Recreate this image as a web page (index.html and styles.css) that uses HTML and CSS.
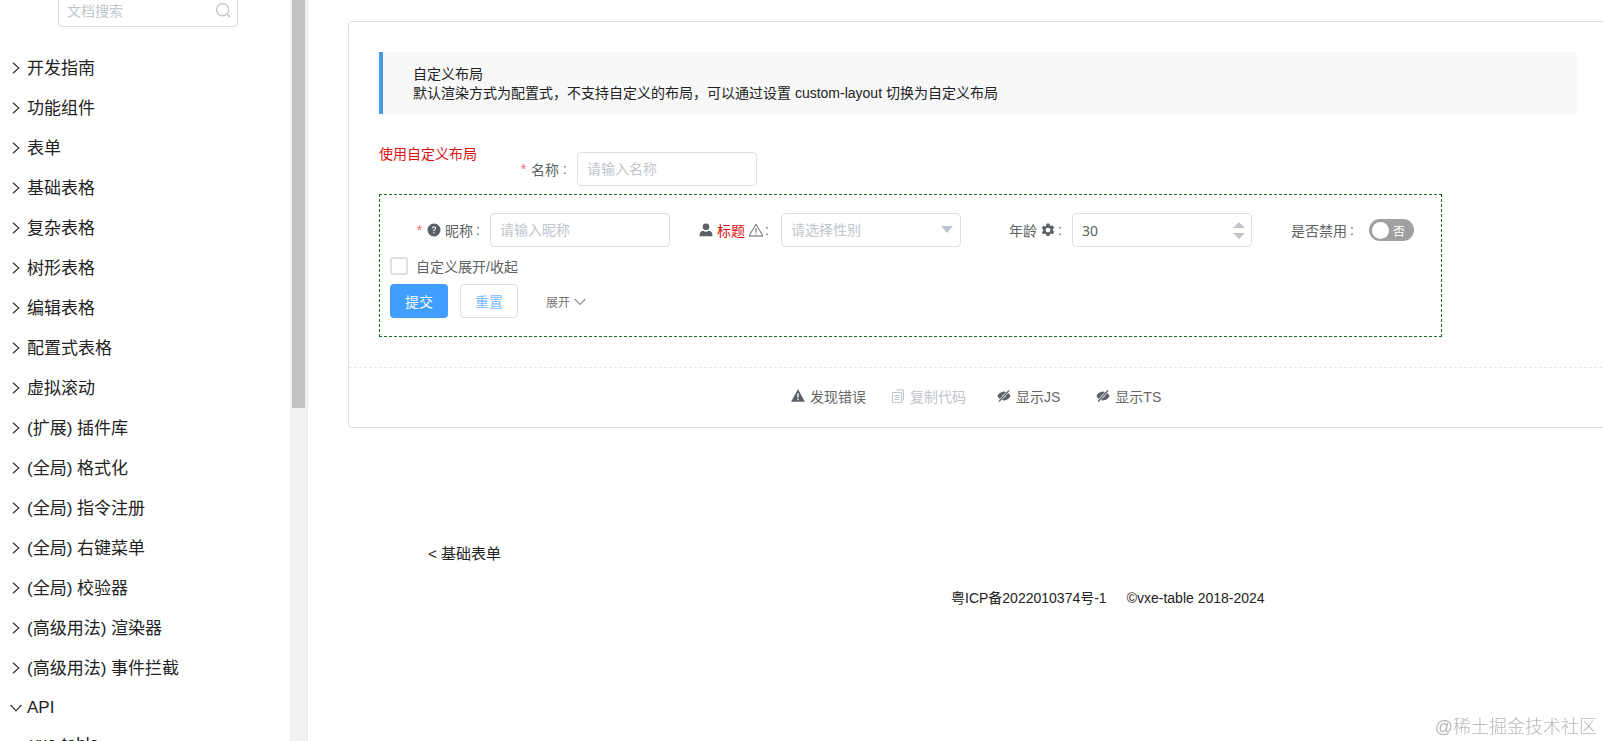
FILE: index.html
```html
<!DOCTYPE html>
<html lang="zh-CN">
<head>
    <meta charset="UTF-8">
    <meta name="viewport" content="width=device-width, initial-scale=1.0">
    <title>自定义布局</title>
    <link rel="stylesheet" href="styles.css">
</head>
<body>

    <div class="page">
        <aside class="sidebar">
            <div class="side-col">
                <div class="search">
                    <input type="text" class="search-input" placeholder="文档搜索">
                    <svg class="search-icon" viewBox="0 0 16 16" width="17" height="17"><circle cx="7.2" cy="7.2" r="5.7" fill="none" stroke="#c0c4cc" stroke-width="1.3"/><path d="M11.3 11.3l3 3" stroke="#c0c4cc" stroke-width="1.5" fill="none"/></svg>
                </div>
                <ul class="menu">
                    <li class="menu-item"><svg class="arrow" viewBox="0 0 8 12"><path d="M1 .7L6.8 6 1 11.3"/></svg>开发指南</li>
                    <li class="menu-item"><svg class="arrow" viewBox="0 0 8 12"><path d="M1 .7L6.8 6 1 11.3"/></svg>功能组件</li>
                    <li class="menu-item"><svg class="arrow" viewBox="0 0 8 12"><path d="M1 .7L6.8 6 1 11.3"/></svg>表单</li>
                    <li class="menu-item"><svg class="arrow" viewBox="0 0 8 12"><path d="M1 .7L6.8 6 1 11.3"/></svg>基础表格</li>
                    <li class="menu-item"><svg class="arrow" viewBox="0 0 8 12"><path d="M1 .7L6.8 6 1 11.3"/></svg>复杂表格</li>
                    <li class="menu-item"><svg class="arrow" viewBox="0 0 8 12"><path d="M1 .7L6.8 6 1 11.3"/></svg>树形表格</li>
                    <li class="menu-item"><svg class="arrow" viewBox="0 0 8 12"><path d="M1 .7L6.8 6 1 11.3"/></svg>编辑表格</li>
                    <li class="menu-item"><svg class="arrow" viewBox="0 0 8 12"><path d="M1 .7L6.8 6 1 11.3"/></svg>配置式表格</li>
                    <li class="menu-item"><svg class="arrow" viewBox="0 0 8 12"><path d="M1 .7L6.8 6 1 11.3"/></svg>虚拟滚动</li>
                    <li class="menu-item"><svg class="arrow" viewBox="0 0 8 12"><path d="M1 .7L6.8 6 1 11.3"/></svg>(扩展) 插件库</li>
                    <li class="menu-item"><svg class="arrow" viewBox="0 0 8 12"><path d="M1 .7L6.8 6 1 11.3"/></svg>(全局) 格式化</li>
                    <li class="menu-item"><svg class="arrow" viewBox="0 0 8 12"><path d="M1 .7L6.8 6 1 11.3"/></svg>(全局) 指令注册</li>
                    <li class="menu-item"><svg class="arrow" viewBox="0 0 8 12"><path d="M1 .7L6.8 6 1 11.3"/></svg>(全局) 右键菜单</li>
                    <li class="menu-item"><svg class="arrow" viewBox="0 0 8 12"><path d="M1 .7L6.8 6 1 11.3"/></svg>(全局) 校验器</li>
                    <li class="menu-item"><svg class="arrow" viewBox="0 0 8 12"><path d="M1 .7L6.8 6 1 11.3"/></svg>(高级用法) 渲染器</li>
                    <li class="menu-item"><svg class="arrow" viewBox="0 0 8 12"><path d="M1 .7L6.8 6 1 11.3"/></svg>(高级用法) 事件拦截</li>
                    <li class="menu-item menu-api"><svg class="arrow arrow-open" viewBox="0 0 12 8"><path d="M.7 1L6 6.8 11.3 1"/></svg>API</li>
                    <li class="menu-item menu-sub">vxe-table</li>
                </ul>
            </div>
            <div class="scrollbar"><div class="scroll-thumb"></div></div>
        </aside>

        <main class="content">
            <section class="card">
                <div class="card-body">
                    <div class="tip">
                        <p>自定义布局</p>
                        <p>默认渲染方式为配置式，不支持自定义的布局，可以通过设置 custom-layout 切换为自定义布局</p>
                    </div>

                    <div class="top-row">
                        <span class="red-text">使用自定义布局</span>
                        <label class="field-label label-name"><span class="star">*</span>名称<span class="colon">:</span></label>
                        <input type="text" class="text-input" placeholder="请输入名称">
                    </div>

                    <div class="custom-box">
                        <div class="form-row">
                            <label class="field-label label-1"><span class="star">*</span>
                                <svg class="ico" viewBox="0 0 14 14" width="14" height="14"><circle cx="7" cy="7" r="6.5" fill="#5a5e66"/><path d="M4.9 5.3c0-1.3 1-2.1 2.2-2.1s2.1.8 2.1 1.9c0 1.7-1.9 1.6-1.9 3.1H6.200c0-2 1.800-2 1.800-3 0-.5-.4-.9-.9-.9-.6 0-1 .4-1 1z" fill="#fff"/><rect x="6.200" y="9.200" width="1.200" height="1.300" fill="#fff"/></svg>
                                昵称<span class="colon">:</span></label>
                            <input type="text" class="text-input" placeholder="请输入昵称">

                            <label class="field-label label-2">
                                <svg class="ico" viewBox="0 0 14 14" width="14" height="14"><circle cx="7" cy="3.800" r="3.300" fill="#5a5e66"/><path d="M.6 13.300v-1.800c0-2.300 2.200-3.500 3.700-3.700.8.700 1.700 1 2.700 1s1.900-.3 2.700-1c1.500.2 3.700 1.400 3.700 3.700v1.800z" fill="#5a5e66"/></svg>
                                <span class="red-title">标题</span>
                                <svg class="ico" viewBox="0 0 16 14" width="16" height="14"><path d="M8 1.200L15 13H1z" fill="none" stroke="#606266" stroke-width="1"/><path d="M8 5v4.500M8 10.400v1.200" stroke="#606266" stroke-width="1"/></svg><span class="colon">:</span></label>
                            <div class="select-box">
                                <input type="text" class="bare-input" placeholder="请选择性别">
                                <span class="caret"></span>
                            </div>

                            <label class="field-label label-3">年龄
                                <svg class="ico" viewBox="0 0 14 14" width="14" height="14"><path fill-rule="evenodd" d="M5.600.5h2.800l.4 1.800 1.200.7 1.800-.6 1.400 2.400-1.400 1.300v1.400l1.400 1.300-1.400 2.400-1.800-.6-1.200.7-.4 1.800H5.600l-.4-1.800-1.200-.7-1.800.6L.8 9.200l1.400-1.300V6.500L.8 5.200l1.400-2.400 1.800.6 1.200-.7zM7 4.700a2.400 2.400 0 1 0 0 4.800 2.400 2.400 0 0 0 0-4.800z" fill="#5a5e66"/></svg><span class="colon">:</span></label>
                            <div class="select-box number-box">
                                <input type="text" class="bare-input" value="30">
                                <span class="spinner"><i class="spin-up"></i><i class="spin-down"></i></span>
                            </div>

                            <label class="field-label label-4">是否禁用<span class="colon">:</span></label>
                            <div class="switch"><span class="knob"></span><span class="switch-text">否</span></div>
                        </div>

                        <div class="check-row">
                            <span class="checkbox"></span>
                            <span>自定义展开/收起</span>
                        </div>

                        <div class="btn-row">
                            <button class="btn btn-primary">提交</button>
                            <button class="btn btn-plain">重置</button>
                            <span class="collapse">展开<svg viewBox="0 0 12 8" width="12" height="8"><path d="M.7 1L6 6.500 11.300 1" fill="none" stroke="#909399" stroke-width="1.200"/></svg></span>
                        </div>
                    </div>
                </div>

                <div class="actions">
                    <span class="action">
                        <svg class="ico" viewBox="0 0 14 13" width="14" height="13"><path fill-rule="evenodd" d="M7 .3l6.900 12.400H.1zM6.200 4.500l.2 4.300h1.200l.2-4.300zM6.300 9.700v1.500h1.400V9.700z" fill="#5a5e66"/></svg>发现错误</span>
                    <span class="action action-off action-code">
                        <svg class="ico" viewBox="0 0 14 14" width="14" height="14"><path d="M4.500 1h8v10h-2M1.500 3.500h9v10h-9zM3.500 6.500h5M3.500 8.500h5M3.500 10.500h5" fill="none" stroke="#c0c4cc" stroke-width="1"/></svg>复制代码</span>
                    <span class="action action-js">
                        <svg class="ico" viewBox="0 0 14 12" width="14" height="12"><path d="M7 1.500C3.900 1.500 1.600 3.800.5 6c1.100 2.200 3.400 4.500 6.500 4.500s5.400-2.300 6.500-4.500C12.400 3.800 10.100 1.500 7 1.500z" fill="#5a5e66"/><circle cx="7" cy="6" r="1.600" fill="#fff"/><path d="M2 11.500L12 .5" stroke="#fff" stroke-width="2.400"/><path d="M2 11.500L12 .5" stroke="#5a5e66" stroke-width="1.200"/></svg>显示JS</span>
                    <span class="action">
                        <svg class="ico" viewBox="0 0 14 12" width="14" height="12"><path d="M7 1.500C3.900 1.500 1.600 3.800.5 6c1.100 2.200 3.400 4.500 6.500 4.500s5.400-2.300 6.500-4.500C12.400 3.800 10.100 1.500 7 1.500z" fill="#5a5e66"/><circle cx="7" cy="6" r="1.600" fill="#fff"/><path d="M2 11.500L12 .5" stroke="#fff" stroke-width="2.400"/><path d="M2 11.500L12 .5" stroke="#5a5e66" stroke-width="1.200"/></svg>显示TS</span>
                </div>
            </section>

            <a class="prev-link">&lt; 基础表单</a>

            <div class="footer">
                <span>粤ICP备2022010374号-1</span>
                <span>©vxe-table 2018-2024</span>
            </div>
        </main>
    </div>

    <div class="watermark">@稀土掘金技术社区</div>

</body>
</html>
```

FILE: styles.css
```css
:root {
    --text-color: #303133;
    --label-color: #606266;
    --line-color: #dcdfe6;
    --muted-color: #c0c4cc;
    --blue: #409eff;
}
* { box-sizing: border-box; }
body {
    margin: 0;
    font-family: "Liberation Sans", "Noto Sans CJK SC", sans-serif;
    font-size: 14px;
    color: var(--text-color);
    background: #fff;
}
input {
    font-family: inherit;
    font-size: 14px;
    color: var(--label-color);
    outline: none;
}
input::placeholder { color: var(--muted-color); opacity: 1; }
.page {
    display: flex;
    height: 100vh;
    overflow: hidden;
}

/* sidebar */
.sidebar {
    display: flex;
    flex: none;
    width: 308px;
    border-right: 1px solid #e8e8e8;
}
.side-col {
    flex: none;
    width: 290px;
    overflow: hidden;
}
.search {
    display: flex;
    align-items: center;
    width: 180px;
    height: 27px;
    margin-left: 58px;
    padding: 0 5px 5px 8px;
    border: 1px solid var(--line-color);
    border-top: none;
    border-radius: 0 0 4px 4px;
}
.search-input {
    flex: 1;
    min-width: 0;
    padding: 0;
    border: none;
}
.menu {
    list-style: none;
    margin: 19px 0 0;
    padding: 0;
}
.menu-item {
    display: flex;
    align-items: center;
    height: 40px;
    padding-left: 12px;
    font-size: 17px;
    color: #222;
}
.menu-api { padding-top: 3px; }
.menu-sub {
    margin-top: -2px;
    padding-left: 30px;
}
.arrow {
    flex: none;
    width: 8px;
    height: 12px;
    margin: 3px 7px 0 0;
    fill: none;
    stroke: #333;
    stroke-width: 1.2;
}
.arrow-open {
    width: 12px;
    height: 8px;
    margin: 0 5px 0 -2px;
}
.scrollbar {
    flex: none;
    width: 17px;
    padding: 0 2px;
    background: #f1f1f1;
}
.scroll-thumb {
    height: 408px;
    background: #c1c1c1;
}

/* content */
.content {
    flex: 1;
    min-width: 0;
    padding: 21px 0 0 40px;
    overflow: hidden;
}
.card {
    width: 1300px;
    height: 407px;
    border: 1px solid var(--line-color);
    border-radius: 4px;
}
.card-body {
    height: 345px;
    padding: 30px 0 0 30px;
}
.tip {
    width: 1198px;
    padding: 13px 0 11px 30px;
    background: #f8f8f8;
    border-left: 4px solid #4a9ae8;
    color: #222;
    line-height: 19px;
}
.tip p { margin: 0; }
.top-row {
    display: flex;
    align-items: flex-start;
    margin-top: 30px;
    height: 50px;
}
.red-text {
    width: 98px;
    line-height: 20px;
    color: #dd1111;
}
.text-input {
    flex: none;
    width: 180px;
    height: 34px;
    padding: 0 9px;
    border: 1px solid var(--line-color);
    border-radius: 4px;
}
.top-row .text-input { margin-top: 8px; }
.field-label {
    display: flex;
    flex: none;
    align-items: center;
    justify-content: flex-end;
    height: 34px;
    color: var(--label-color);
}
.top-row .field-label { margin-top: 8px; }
.label-name { width: 100px; padding-right: 10px; }
.label-name .colon { margin-left: 4px; }
.label-1 { width: 100px; padding-right: 10px; }
.label-2 { width: 111px; padding-right: 12px; }
.label-2 .colon { margin-left: 1px; }
.label-3 { width: 111px; padding-right: 10px; }
.label-4 { width: 117px; padding-right: 15px; }
.star {
    margin-right: 5px;
    color: #f56c6c;
}
.colon { margin-left: 3px; }
.ico { flex: none; }
.label-1 .ico { margin-right: 4px; }
.label-2 .ico { margin-right: 4px; }
.label-2 .ico + .red-title + .ico { margin-left: 3px; margin-right: 0; }
.label-3 .ico { margin-left: 4px; }
.red-title { color: #dd1111; }

.custom-box {
    width: 1063px;
    height: 143px;
    padding: 18px 10px 0;
    border: 1px dashed #1b6b2a;
}
.form-row {
    display: flex;
    align-items: center;
    height: 34px;
}
.select-box {
    display: flex;
    flex: none;
    align-items: center;
    width: 180px;
    height: 34px;
    padding: 0 7px 0 9px;
    border: 1px solid var(--line-color);
    border-radius: 4px;
}
.number-box { padding-right: 6px; }
.bare-input {
    flex: 1;
    min-width: 0;
    padding: 0;
    border: none;
}
.number-box .bare-input { font-family: "Noto Sans", sans-serif; }
.caret {
    flex: none;
    width: 0;
    height: 0;
    margin-bottom: 2px;
    border-left: 6.5px solid transparent;
    border-right: 6.5px solid transparent;
    border-top: 7px solid var(--muted-color);
}
.spinner {
    display: flex;
    flex: none;
    flex-direction: column;
    gap: 5px;
}
.spin-up, .spin-down {
    display: block;
    width: 0;
    height: 0;
    border-left: 6px solid transparent;
    border-right: 6px solid transparent;
}
.spin-up { border-bottom: 6px solid var(--muted-color); }
.spin-down { border-top: 6px solid var(--muted-color); }
.switch {
    display: flex;
    flex: none;
    align-items: center;
    width: 45px;
    height: 22px;
    padding-left: 3px;
    border-radius: 11px;
    background: #a0a0a0;
}
.knob {
    width: 17px;
    height: 17px;
    border-radius: 50%;
    background: #fff;
}
.switch-text {
    margin-left: 4px;
    font-size: 12px;
    color: #fff;
}
.check-row {
    display: flex;
    align-items: center;
    height: 24px;
    margin-top: 7px;
    color: var(--label-color);
}
.checkbox {
    width: 18px;
    height: 18px;
    margin-right: 8px;
    border: 2px solid var(--line-color);
    border-radius: 3px;
}
.btn-row {
    display: flex;
    align-items: center;
    margin-top: 6px;
}
.btn {
    width: 58px;
    height: 34px;
    margin-right: 12px;
    padding: 0;
    font-family: inherit;
    font-size: 14px;
    border-radius: 4px;
}
.btn-primary {
    border: none;
    background: var(--blue);
    color: #fff;
}
.btn-plain {
    border: 1px solid var(--line-color);
    background: #fff;
    color: #79bbff;
}
.collapse {
    display: flex;
    align-items: center;
    gap: 4px;
    margin-left: 16px;
    font-size: 12px;
    color: #777;
}
.collapse svg { margin-top: 2px; }

/* actions */
.actions {
    display: flex;
    align-items: center;
    height: 60px;
    padding: 0 0 4px 442px;
    border-top: 1px dashed #e4e7ed;
    color: #666;
}
.action {
    display: flex;
    align-items: center;
    gap: 5px;
    margin-right: 25px;
}
.action-off { color: #c0c4cc; }
.action-code { margin-right: 31px; }
.action-js { margin-right: 36px; }

.prev-link {
    display: block;
    margin: 116px 0 0 80px;
    font-size: 15px;
    line-height: 20px;
    color: #222;
}
.footer {
    display: flex;
    gap: 20px;
    margin: 24px 0 0 603px;
    line-height: 20px;
    color: #222;
}

.watermark {
    position: fixed;
    right: 6px;
    bottom: 3px;
    font-size: 18px;
    font-weight: 300;
    color: #b8b8b8;
}
```
